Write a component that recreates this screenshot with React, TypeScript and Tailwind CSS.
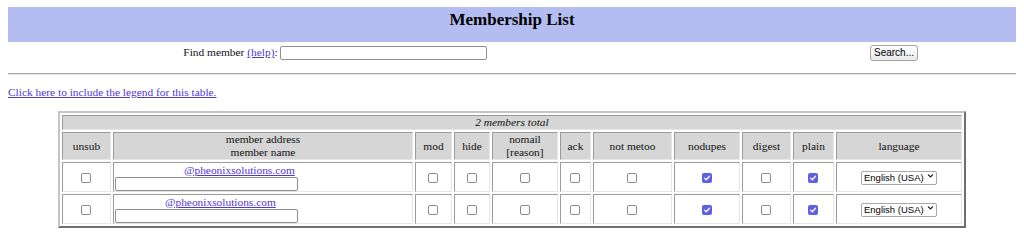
import React from 'react';

const serif = "font-['Liberation_Serif','Times_New_Roman',serif]";
const sans = "font-['Liberation_Sans',Arial,sans-serif]";

type Member = { pad: string; nodupes: boolean; plain: boolean };

const members: Member[] = [
	{ pad: 'w-[70px]', nodupes: true, plain: true },
	{ pad: 'w-[51px]', nodupes: true, plain: true },
];

const Box = ({ checked }: { checked?: boolean }) =>
	checked ? (
		<span className="inline-flex h-[10px] w-[10px] items-center justify-center rounded-[2px] bg-[#5f5fe3] align-middle">
			<svg viewBox="0 0 10 10" className="h-[8px] w-[8px]">
				<path d="M2 5.2 L4.1 7.2 L8 2.8" fill="none" stroke="#fff" strokeWidth="1.6" strokeLinecap="round" strokeLinejoin="round" />
			</svg>
		</span>
	) : (
		<span className="inline-block h-[10px] w-[10px] rounded-[2px] border border-[#8c8c8c] bg-white align-middle" />
	);

const LangSelect = () => (
	<div className="relative inline-block align-middle">
		<select
			defaultValue="en"
			className={`${sans} h-[14px] w-[76px] appearance-none rounded-[2px] border border-[#a9a9a9] bg-white pl-[2px] text-[9.5px] leading-[12px] text-black`}
		>
			<option value="en">English (USA)</option>
		</select>
		<svg viewBox="0 0 10 10" className="pointer-events-none absolute right-[3px] top-[4px] h-[6px] w-[7px]">
			<path d="M1.5 3 L5 6.5 L8.5 3" fill="none" stroke="#111" strokeWidth="2" strokeLinecap="round" strokeLinejoin="round" />
		</svg>
	</div>
);

const cols = ['w-[49px]', 'w-[300px]', 'w-[37px]', 'w-[36px]', 'w-[66px]', 'w-[31px]', 'w-[79px]', 'w-[66px]', 'w-[49px]', 'w-[41px]', 'w-[126px]'];

const th = 'border border-t-[#9a9a9a] border-l-[#9a9a9a] border-r-[#e6e6e6] border-b-[#e6e6e6] bg-[#d6d6d6] font-normal text-center align-middle leading-[13px] p-0';
const td = 'border border-t-[#9a9a9a] border-l-[#9a9a9a] border-r-[#e6e6e6] border-b-[#e6e6e6] bg-white text-center align-middle p-0';

export default function App() {
	return (
		<div className={`${serif} min-h-[249px] bg-white px-2 pt-[7px] text-[11.4px] text-[#111]`}>
			<div className="h-[35px] w-full bg-[#b3bdf2] pt-[3px] text-center">
				<h1 className="text-[17px] font-bold leading-[20px] text-black">Membership List</h1>
			</div>

			<div className="mt-[3px] flex h-[16px] items-center">
				<div className="flex w-[654px] items-center justify-center">
					<span>
						Find member{' '}
						<a href="#" className="text-[#5036d6] underline">
							(help)
						</a>
						:
					</span>
					<input type="text" className="ml-[2px] h-[14px] w-[207px] rounded-[2px] border border-[#8f8f8f] bg-white" />
				</div>
				<button
					type="button"
					className={`${sans} ml-[208px] h-[16px] w-[48px] rounded-[3px] border border-[#a3a3a3] bg-gradient-to-b from-white to-[#e9e9e9] text-[10px] leading-[14px] text-black`}
				>
					Search...
				</button>
			</div>

			<div className="mt-[12px] h-[2px] w-full border-t border-b border-t-[#a8a8a8] border-b-[#e8e8e8]" />

			<div className="mt-[10px] leading-[14px]">
				<a href="#" className="text-[#5036d6] underline">
					Click here to include the legend for this table.
				</a>
			</div>

			<table className="mx-auto mt-[12px] w-[908px] table-fixed border-separate border-spacing-[2px] border-2 border-t-[#c4c4c4] border-l-[#c4c4c4] border-r-[#6f6f6f] border-b-[#6f6f6f]">
				<colgroup>
					{cols.map((c, i) => (
						<col key={i} className={c} />
					))}
				</colgroup>
				<thead>
					<tr>
						<th colSpan={11} className={`${th} h-[13px] italic`}>
							2 members total
						</th>
					</tr>
					<tr>
						<th className={`${th} h-[26px]`}>unsub</th>
						<th className={th}>
							member address
							<br />
							member name
						</th>
						<th className={th}>mod</th>
						<th className={th}>hide</th>
						<th className={th}>
							nomail
							<br />
							[reason]
						</th>
						<th className={th}>ack</th>
						<th className={th}>not metoo</th>
						<th className={th}>nodupes</th>
						<th className={th}>digest</th>
						<th className={th}>plain</th>
						<th className={th}>language</th>
					</tr>
				</thead>
				<tbody>
					{members.map((m, i) => (
						<tr key={i}>
							<td className={`${td} h-[30px]`}>
								<Box />
							</td>
							<td className={`${td} text-left`}>
								<div className="leading-[13px]">
									<span className={`inline-block ${m.pad}`} />
									<a href="#" className="text-[#5036d6] underline">
										@pheonixsolutions.com
									</a>
								</div>
								<input type="text" className="ml-[1px] block h-[14px] w-[183px] rounded-[2px] border border-[#8f8f8f] bg-white" />
							</td>
							<td className={td}>
								<Box />
							</td>
							<td className={td}>
								<Box />
							</td>
							<td className={td}>
								<Box />
							</td>
							<td className={td}>
								<Box />
							</td>
							<td className={td}>
								<Box />
							</td>
							<td className={td}>
								<Box checked={m.nodupes} />
							</td>
							<td className={td}>
								<Box />
							</td>
							<td className={td}>
								<Box checked={m.plain} />
							</td>
							<td className={td}>
								<LangSelect />
							</td>
						</tr>
					))}
				</tbody>
			</table>
		</div>
	);
}
